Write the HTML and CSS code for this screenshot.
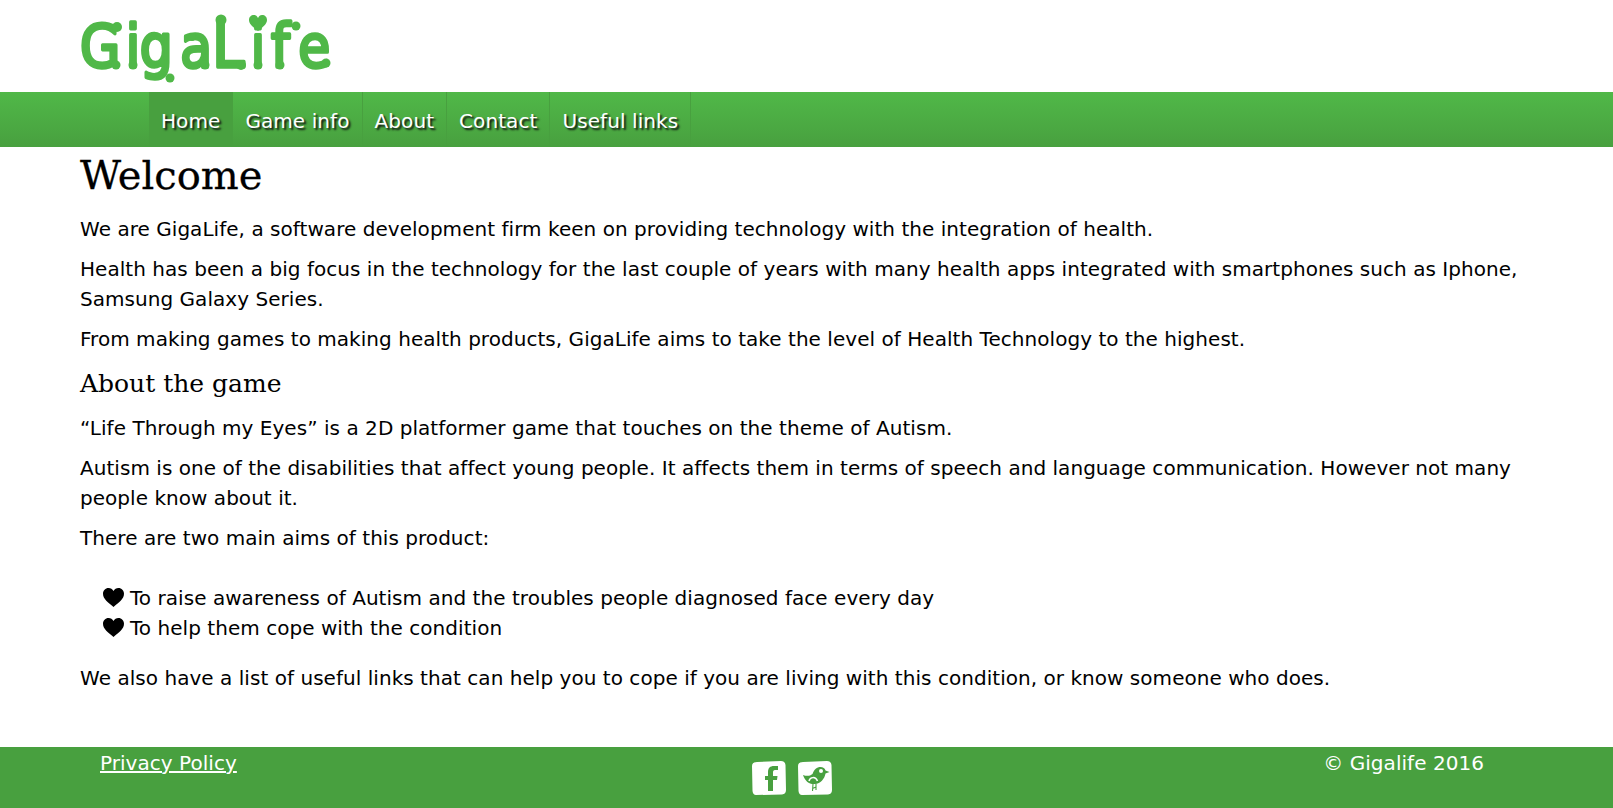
FILE: index.html
```html
<!DOCTYPE html>
<html lang="en">
<head>
  <meta charset="UTF-8" />
  <meta name="viewport" content="width=device-width, initial-scale=1.0"/>
  <title>GigaLife</title>
  <link rel="stylesheet" href="styles.css">
</head>
<body>
  <header class="logo-bar">
    <svg class="logo" viewBox="0 0 270 92">
      <text class="logo-text" transform="scale(0.88 1)" y="67"><tspan x="0 52 68 114">Giga</tspan><tspan class="logo-tall" x="150">L</tspan><tspan x="194">i</tspan><tspan class="logo-f" x="217">f</tspan><tspan x="248">e</tspan></text>
      <g class="logo-dots">
        <circle cx="37" cy="27" r="5"/>
        <circle cx="36" cy="65" r="4.500"/>
        <circle cx="53" cy="65" r="4.500"/>
        <circle cx="90" cy="78" r="4.500"/>
        <circle cx="112" cy="37" r="4"/>
        <circle cx="125" cy="65" r="4.500"/>
        <circle cx="141" cy="20" r="5.500"/>
        <circle cx="161" cy="65" r="5"/>
        <circle cx="178" cy="65" r="4.500"/>
        <circle cx="200" cy="65" r="4.500"/>
        <circle cx="216" cy="26" r="4.500"/>
        <circle cx="246" cy="63" r="4.500"/>
      </g>
      <path class="logo-heart" d="M178 31C173 27 169 24 169 20C169 17 171 15 174 15C176 15 177 16 178 18C179 16 180 15 182 15C185 15 187 17 187 20C187 24 183 27 178 31Z"/>
    </svg>
  </header>

  <nav class="nav">
    <a href="#" class="active">Home</a>
    <a href="#">Game info</a>
    <a href="#">About</a>
    <a href="#">Contact</a>
    <a href="#">Useful links</a>
  </nav>

  <main class="content">
    <h1>Welcome</h1>
    <p>We are GigaLife, a software development firm keen on providing technology with the integration of health.</p>
    <p>Health has been a big focus in the technology for the last couple of years with many health apps integrated with smartphones such as Iphone, Samsung Galaxy Series.</p>
    <p>From making games to making health products, GigaLife aims to take the level of Health Technology to the highest.</p>
    <h2>About the game</h2>
    <p>“Life Through my Eyes” is a 2D platformer game that touches on the theme of Autism.</p>
    <p>Autism is one of the disabilities that affect young people. It affects them in terms of speech and language communication. However not many people know about it.</p>
    <p>There are two main aims of this product:</p>
    <ul class="hearts">
      <li><svg class="heart" viewBox="0 0 20 18"><path d="M10 18C5 14 0 10.500 0 5.500C0 2.300 2.300 0 5.300 0C7.300 0 9 1 10 2.800C11 1 12.700 0 14.700 0C17.700 0 20 2.300 20 5.500C20 10.500 15 14 10 18Z"/></svg>To raise awareness of Autism and the troubles people diagnosed face every day</li>
      <li><svg class="heart" viewBox="0 0 20 18"><path d="M10 18C5 14 0 10.500 0 5.500C0 2.300 2.300 0 5.300 0C7.300 0 9 1 10 2.800C11 1 12.700 0 14.700 0C17.700 0 20 2.300 20 5.500C20 10.500 15 14 10 18Z"/></svg>To help them cope with the condition</li>
    </ul>
    <p>We also have a list of useful links that can help you to cope if you are living with this condition, or know someone who does.</p>
  </main>

  <footer class="footer">
    <a href="#" class="privacy">Privacy Policy</a>
    <div class="social">
      <svg viewBox="0 0 34 34" class="social-icon">
        <path fill="#fff" d="M5 1L29 0Q33 0 33.500 4L34 29Q34 33 30 33.500L4 34Q1 34 .5 30L0 5Q0 1 5 1Z"/>
        <path fill="#48a03f" d="M16 30V19H13V15H16V11C16 7 18 5 22 5H26V9H23C21.500 9 21 10 21 11.500V15H25.500L25 19H21V30Z"/>
      </svg>
      <svg viewBox="0 0 34 34" class="social-icon">
        <path fill="#fff" d="M5 1L29 0Q33 0 33.500 4L34 29Q34 33 30 33.500L4 34Q1 34 .5 30L0 5Q0 1 5 1Z"/>
        <path fill="#48a03f" d="M5 14C9 15.500 12 15 14.500 13C16 8.500 19 6 22.500 6C25 6 27 7.500 27.500 9.500L31.500 11L27.500 12.500C26.500 18 22.500 22.500 17 23C11 23.500 7 20 5 14Z"/>
        <circle fill="#fff" cx="23" cy="10" r="2"/>
        <path fill="none" stroke="#fff" stroke-width="1.500" d="M11 20C12 16 17.500 15 19.500 20"/>
        <path fill="none" stroke="#48a03f" stroke-width="1.100" d="M15 23L14.500 30M18 23L18 29M14.500 27.500L18 26"/>
      </svg>
    </div>
    <div class="copyright">© Gigalife 2016</div>
  </footer>
</body>
</html>
```

FILE: styles.css
```css
html, body {
  height: 100%;
}

body {
  font-family: "DejaVu Sans", Verdana, sans-serif;
  font-size: 20px;
  line-height: 30px;
  letter-spacing: 0.04px;
  margin: 0;
  padding: 0;
  color: #000;
  background: #fff;
  display: flex;
  flex-direction: column;
  overflow: hidden;
}

.logo-bar {
  height: 92px;
  padding-left: 80px;
}

.logo {
  display: block;
  width: 270px;
  height: 92px;
}

.logo-text {
  font-family: "DejaVu Sans", sans-serif;
  font-size: 59px;
  letter-spacing: 0;
  fill: #50b848;
  stroke: #50b848;
  stroke-width: 3.500px;
  stroke-linejoin: round;
}

.logo-tall {
  font-size: 66px;
}

.logo-f {
  font-size: 61px;
}

.logo-dots,
.logo-heart {
  fill: #50b848;
}

.nav {
  height: 55px;
  display: flex;
  padding-left: 149px;
  background: linear-gradient(#50b848, #48a03f);
}

.nav a {
  display: block;
  padding: 0 12px;
  line-height: 59px;
  font-size: 20px;
  letter-spacing: 0.08px;
  color: #fff;
  text-decoration: none;
  text-shadow: 2px 2px 2px #111;
  border-right: 1px solid #48a03f;
}

.nav a.active {
  background: #48a03f;
}

.content {
  flex: 1;
  padding: 0 80px;
}

h1 {
  font-family: "DejaVu Serif", serif;
  font-size: 40px;
  font-weight: normal;
  line-height: 57px;
  letter-spacing: 0;
  -webkit-text-stroke: 0.3px #000;
  margin: 0;
}

h2 {
  font-family: "DejaVu Serif", serif;
  font-size: 25px;
  font-weight: normal;
  line-height: 39px;
  letter-spacing: 0;
  margin: 10px 0;
}

p {
  margin: 10px 0;
}

.hearts {
  list-style: none;
  margin: 30px 0 20px;
  padding: 0 0 0 23px;
}

.heart {
  width: 21px;
  height: 19px;
  margin-right: 6px;
  vertical-align: -2px;
}

.footer {
  box-sizing: border-box;
  height: 61px;
  display: flex;
  justify-content: space-between;
  padding: 1px 129px 0 100px;
  background: #48a03f;
  color: #fff;
}

.footer a {
  color: #fff;
}

.social {
  display: flex;
  gap: 12px;
  padding-top: 13px;
  margin-left: 23px;
}

.social-icon {
  width: 34px;
  height: 34px;
}
```
